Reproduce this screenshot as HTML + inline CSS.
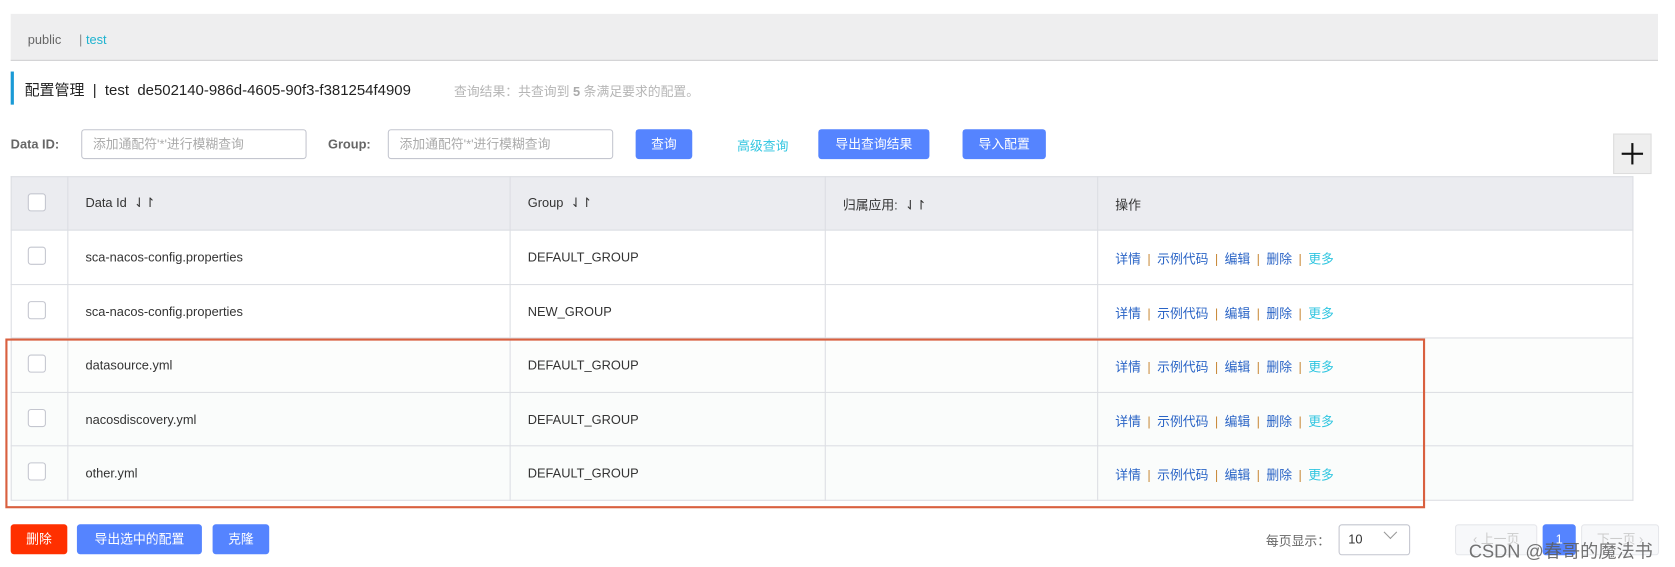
<!DOCTYPE html>
<html><head><meta charset="utf-8"><style>
*{box-sizing:border-box;margin:0;padding:0}
html,body{width:1675px;height:567px;overflow:hidden;background:#fff}
#w{position:absolute;left:0;top:0;width:1568px;height:531px;transform:scale(1.0683,1.0678);transform-origin:0 0;font-family:"Liberation Sans","Noto Sans CJK SC",sans-serif;color:#333;font-size:12px}
.a{position:absolute;white-space:nowrap}
.btn{position:absolute;background:#5584ff;color:#fff;border-radius:3px;font-size:12px;text-align:center;line-height:28px;height:28px}
.inp{position:absolute;border:1px solid #c4c6cf;border-radius:3px;height:28px;color:#aaa;font-size:12px;line-height:26px;padding-left:10px}
.cb{position:absolute;left:26px;width:17px;height:17px;border:1px solid #c4c6cf;border-radius:3px;background:#fff}
.op{position:absolute;left:1044px;font-size:12px;color:#2a64c6}
.op i{font-style:normal;color:#c98a3a;margin:0 6px}
.op b{font-weight:normal;color:#2fc5e0}
.hl{position:absolute;background:#dcdee3}
</style></head><body><div id="w">
<div class="a" style="left:10px;top:13px;width:1542px;height:44px;background:#eeeeef;border-bottom:1px solid #cfcfd2"></div>
<div class="a" style="left:26px;top:30px;font-size:12px;color:#666">public</div>
<div class="a" style="left:74px;top:30px;font-size:12px;color:#1fb3d0"><span style="color:#888">|</span> test</div>
<div class="a" style="left:10px;top:67px;width:3px;height:31px;background:#1a9ad6"></div>
<div class="a" style="left:23px;top:74px;font-size:14px;color:#222">配置管理 &nbsp;| &nbsp;test &nbsp;de502140-986d-4605-90f3-f381254f4909</div>
<div class="a" style="left:425px;top:77px;font-size:12px;color:#b5b5b5">查询结果：共查询到 <b style="color:#aaa">5</b> 条满足要求的配置。</div>
<div class="a" style="left:10px;top:128px;font-size:12px;font-weight:bold;color:#666">Data ID:</div>
<div class="inp" style="left:76px;top:121px;width:211px">添加通配符'*'进行模糊查询</div>
<div class="a" style="left:307px;top:128px;font-size:12px;font-weight:bold;color:#666">Group:</div>
<div class="inp" style="left:363px;top:121px;width:211px">添加通配符'*'进行模糊查询</div>
<div class="btn" style="left:595px;top:121px;width:53px">查询</div>
<div class="a" style="left:690px;top:128px;color:#2fc5e0">高级查询</div>
<div class="btn" style="left:766px;top:121px;width:104px">导出查询结果</div>
<div class="btn" style="left:901px;top:121px;width:78px">导入配置</div>
<div class="a" style="left:1510px;top:125px;width:36px;height:38px;background:#eee;border:1px solid #ddd"></div>
<div class="a" style="left:1518px;top:143px;width:20px;height:2px;background:#111"></div>
<div class="a" style="left:1527px;top:134px;width:2px;height:20px;background:#111"></div>
<div class="a" style="left:10px;top:165px;width:1519px;height:51px;background:#ebecf0"></div>
<div class="a" style="left:10px;top:367px;width:1519px;height:101px;background:#fafcfb"></div>
<div class="a" style="left:10px;top:317px;width:1519px;height:50px;background:#fcfdfc"></div>
<div class="hl" style="left:10px;top:165px;width:1519px;height:1px"></div>
<div class="hl" style="left:10px;top:215px;width:1519px;height:1px"></div>
<div class="hl" style="left:10px;top:266px;width:1519px;height:1px"></div>
<div class="hl" style="left:10px;top:316px;width:1519px;height:1px"></div>
<div class="hl" style="left:10px;top:367px;width:1519px;height:1px"></div>
<div class="hl" style="left:10px;top:417px;width:1519px;height:1px"></div>
<div class="hl" style="left:10px;top:468px;width:1519px;height:1px"></div>
<div class="hl" style="left:10px;top:165px;width:1px;height:304px"></div>
<div class="hl" style="left:1528px;top:165px;width:1px;height:304px"></div>
<div class="hl" style="left:63px;top:165px;width:1px;height:304px"></div>
<div class="hl" style="left:477px;top:165px;width:1px;height:304px"></div>
<div class="hl" style="left:772px;top:165px;width:1px;height:304px"></div>
<div class="hl" style="left:1027px;top:165px;width:1px;height:304px"></div>
<div class="cb" style="top:181px"></div>
<div class="a" style="left:80px;top:183px">Data Id &nbsp;<span style="font-size:12px">⇃↾</span></div>
<div class="a" style="left:494px;top:183px">Group &nbsp;<span style="font-size:12px">⇃↾</span></div>
<div class="a" style="left:789px;top:183px">归属应用: &nbsp;<span style="font-size:12px">⇃↾</span></div>
<div class="a" style="left:1044px;top:183px">操作</div>
<div class="cb" style="top:231px"></div><div class="a" style="left:80px;top:234px">sca-nacos-config.properties</div><div class="a" style="left:494px;top:234px">DEFAULT_GROUP</div>
<div class="op" style="top:234px">详情<i>|</i>示例代码<i>|</i>编辑<i>|</i>删除<i>|</i><b>更多</b></div>
<div class="cb" style="top:282px"></div><div class="a" style="left:80px;top:285px">sca-nacos-config.properties</div><div class="a" style="left:494px;top:285px">NEW_GROUP</div>
<div class="op" style="top:285px">详情<i>|</i>示例代码<i>|</i>编辑<i>|</i>删除<i>|</i><b>更多</b></div>
<div class="cb" style="top:332px"></div><div class="a" style="left:80px;top:335px">datasource.yml</div><div class="a" style="left:494px;top:335px">DEFAULT_GROUP</div>
<div class="op" style="top:335px">详情<i>|</i>示例代码<i>|</i>编辑<i>|</i>删除<i>|</i><b>更多</b></div>
<div class="cb" style="top:383px"></div><div class="a" style="left:80px;top:386px">nacosdiscovery.yml</div><div class="a" style="left:494px;top:386px">DEFAULT_GROUP</div>
<div class="op" style="top:386px">详情<i>|</i>示例代码<i>|</i>编辑<i>|</i>删除<i>|</i><b>更多</b></div>
<div class="cb" style="top:433px"></div><div class="a" style="left:80px;top:436px">other.yml</div><div class="a" style="left:494px;top:436px">DEFAULT_GROUP</div>
<div class="op" style="top:436px">详情<i>|</i>示例代码<i>|</i>编辑<i>|</i>删除<i>|</i><b>更多</b></div>
<div class="a" style="left:5px;top:317px;width:1329px;height:159px;border:2px solid #d9603f"></div>
<div class="btn" style="left:10px;top:491px;width:53px;background:#ff3000">删除</div>
<div class="btn" style="left:72px;top:491px;width:117px">导出选中的配置</div>
<div class="btn" style="left:199px;top:491px;width:53px">克隆</div>
<div class="a" style="left:1185px;top:498px;color:#666">每页显示：</div>
<div class="a" style="left:1253px;top:491px;width:67px;height:29px;border:1px solid #c4c6cf;border-radius:3px;background:#fff"></div>
<div class="a" style="left:1262px;top:498px;color:#333">10</div>
<div class="a" style="left:1297px;top:494px;width:9px;height:9px;border-right:1px solid #999;border-bottom:1px solid #999;transform:rotate(45deg)"></div>
<div class="a" style="left:1362px;top:491px;width:77px;height:29px;border:1px solid #e6e7eb;background:#f7f8fa;border-radius:3px;color:#ccc;line-height:27px;text-align:center">‹ 上一页</div>
<div class="btn" style="left:1444px;top:491px;width:31px;height:29px">1</div>
<div class="a" style="left:1480px;top:491px;width:73px;height:29px;border:1px solid #e6e7eb;background:#f7f8fa;border-radius:3px;color:#ccc;line-height:27px;text-align:center">下一页 ›</div>
<div class="a" style="left:1375px;top:502px;font-size:17px;color:rgba(90,90,90,0.85)">CSDN @春哥的魔法书</div>
</div></body></html>
